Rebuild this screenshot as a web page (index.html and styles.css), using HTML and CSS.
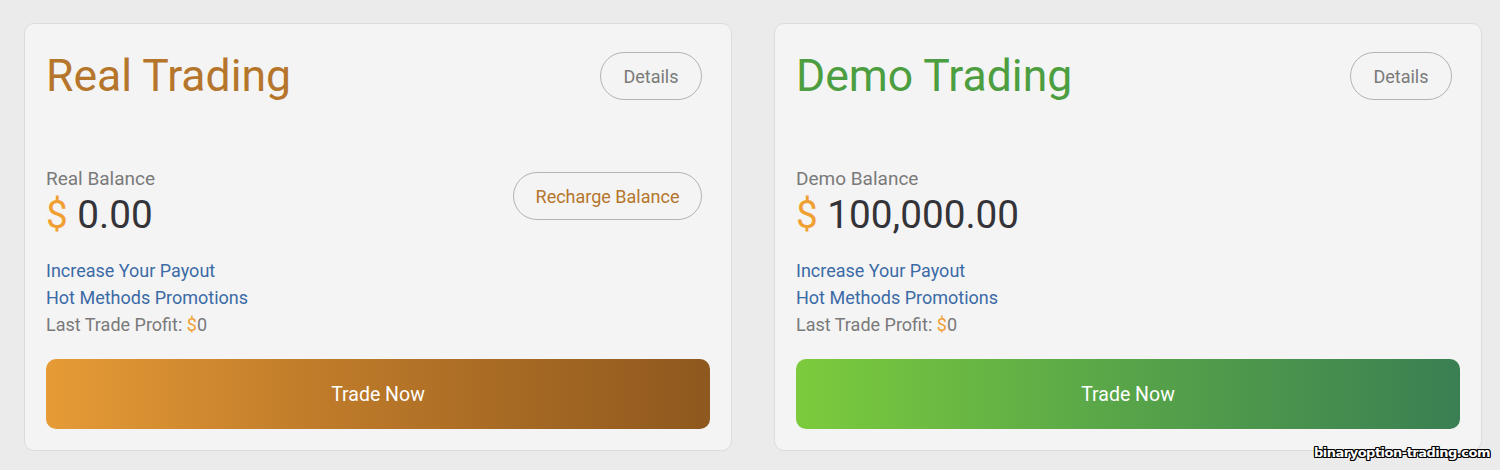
FILE: index.html
```html
<!DOCTYPE html>
<html lang="en">
<head>
<meta charset="utf-8">
<title>Trading Accounts</title>
<link rel="stylesheet" href="styles.css">
</head>
<body>
<main class="accounts">
  <section class="card card-real">
    <header class="card-head">
      <h2 class="card-title">Real Trading</h2>
      <button class="pill pill-details">Details</button>
    </header>
    <div class="balance-row">
      <div class="balance">
        <div class="balance-label">Real Balance</div>
        <div class="balance-amount"><span class="cur">$</span> 0.00</div>
      </div>
      <button class="pill pill-recharge">Recharge Balance</button>
    </div>
    <div class="links">
      <a class="link" href="#">Increase Your Payout</a>
      <a class="link" href="#">Hot Methods Promotions</a>
      <div class="profit">Last Trade Profit: <span class="cur">$</span>0</div>
    </div>
    <button class="trade trade-real">Trade Now</button>
  </section>
  <section class="card card-demo">
    <header class="card-head">
      <h2 class="card-title">Demo Trading</h2>
      <button class="pill pill-details">Details</button>
    </header>
    <div class="balance-row">
      <div class="balance">
        <div class="balance-label">Demo Balance</div>
        <div class="balance-amount"><span class="cur">$</span> 100,000.00</div>
      </div>
    </div>
    <div class="links">
      <a class="link" href="#">Increase Your Payout</a>
      <a class="link" href="#">Hot Methods Promotions</a>
      <div class="profit">Last Trade Profit: <span class="cur">$</span>0</div>
    </div>
    <button class="trade trade-demo">Trade Now</button>
  </section>
</main>
<div class="watermark">binaryoption-trading.com</div>
</body>
</html>
```
FILE: styles.css
```css
* { box-sizing: border-box; }
html, body { margin: 0; padding: 0; }
body {
  background: #ebebeb;
  font-family: Roboto, "Liberation Sans", Arial, sans-serif;
  width: 1500px;
  height: 470px;
  overflow: hidden;
  position: relative;
}
.accounts {
  display: grid;
  grid-template-columns: 708px 708px;
  column-gap: 42px;
  padding: 23px 0 0 24px;
}
.card {
  background: #f4f4f4;
  border: 1px solid #dcdcdc;
  border-radius: 10px;
  padding: 28px 21px 21px 21px;
  display: flex;
  flex-direction: column;
}
.card-head {
  display: flex;
  justify-content: space-between;
  align-items: center;
  height: 48px;
}
.card-title {
  margin: 0;
  font-weight: 400;
  font-size: 44.5px;
  line-height: 48px;
}
.card-real .card-title { color: #b5762c; }
.card-demo .card-title { color: #4c9e40; }
.pill {
  font-family: inherit;
  background: transparent;
  border: 1px solid #b3b3b3;
  border-radius: 24px;
  height: 48px;
  padding: 0;
  margin-right: 8px;
  font-size: 18px;
  cursor: pointer;
}
.pill-details { color: #7a7a7a; width: 102px; }
.pill-recharge { color: #b5762c; margin-top: 5px; width: 189px; }
.balance-row {
  display: flex;
  justify-content: space-between;
  align-items: flex-start;
  margin-top: 67px;
  height: 70px;
}
.balance-label {
  color: #7a7a7a;
  font-size: 19px;
  line-height: 24px;
}
.balance-amount {
  margin-top: 2px;
  color: #333338;
  font-size: 38.7px;
  line-height: 44px;
}
.cur { color: #f0a032; }
.links {
  margin-top: 20px;
  display: flex;
  flex-direction: column;
  font-size: 18px;
  line-height: 27px;
}
.link { color: #3b6ba6; text-decoration: none; }
.profit { color: #7a7a7a; }
.trade {
  margin-top: 21px;
  height: 70px;
  border: 0;
  border-radius: 10px;
  color: #fff;
  font-family: inherit;
  font-size: 19.5px;
  cursor: pointer;
}
.trade-real { background: linear-gradient(90deg, #e69b36 0%, #c07c2a 40%, #8e581e 100%); }
.trade-demo { background: linear-gradient(90deg, #7ccb3c 0%, #5aa848 45%, #3a7f52 100%); }
.watermark {
  position: absolute;
  right: 10px;
  bottom: 10px;
  font-family: "DejaVu Sans", Verdana, sans-serif;
  font-weight: 700;
  font-size: 13px;
  color: #fff;
  letter-spacing: -0.5px;
  text-shadow: -1px -1px 0 #000, 1px -1px 0 #000, -1px 1px 0 #000, 1px 1px 0 #000, 0 1px 0 #000, 0 -1px 0 #000, 1px 0 0 #000, -1px 0 0 #000;
}
```
